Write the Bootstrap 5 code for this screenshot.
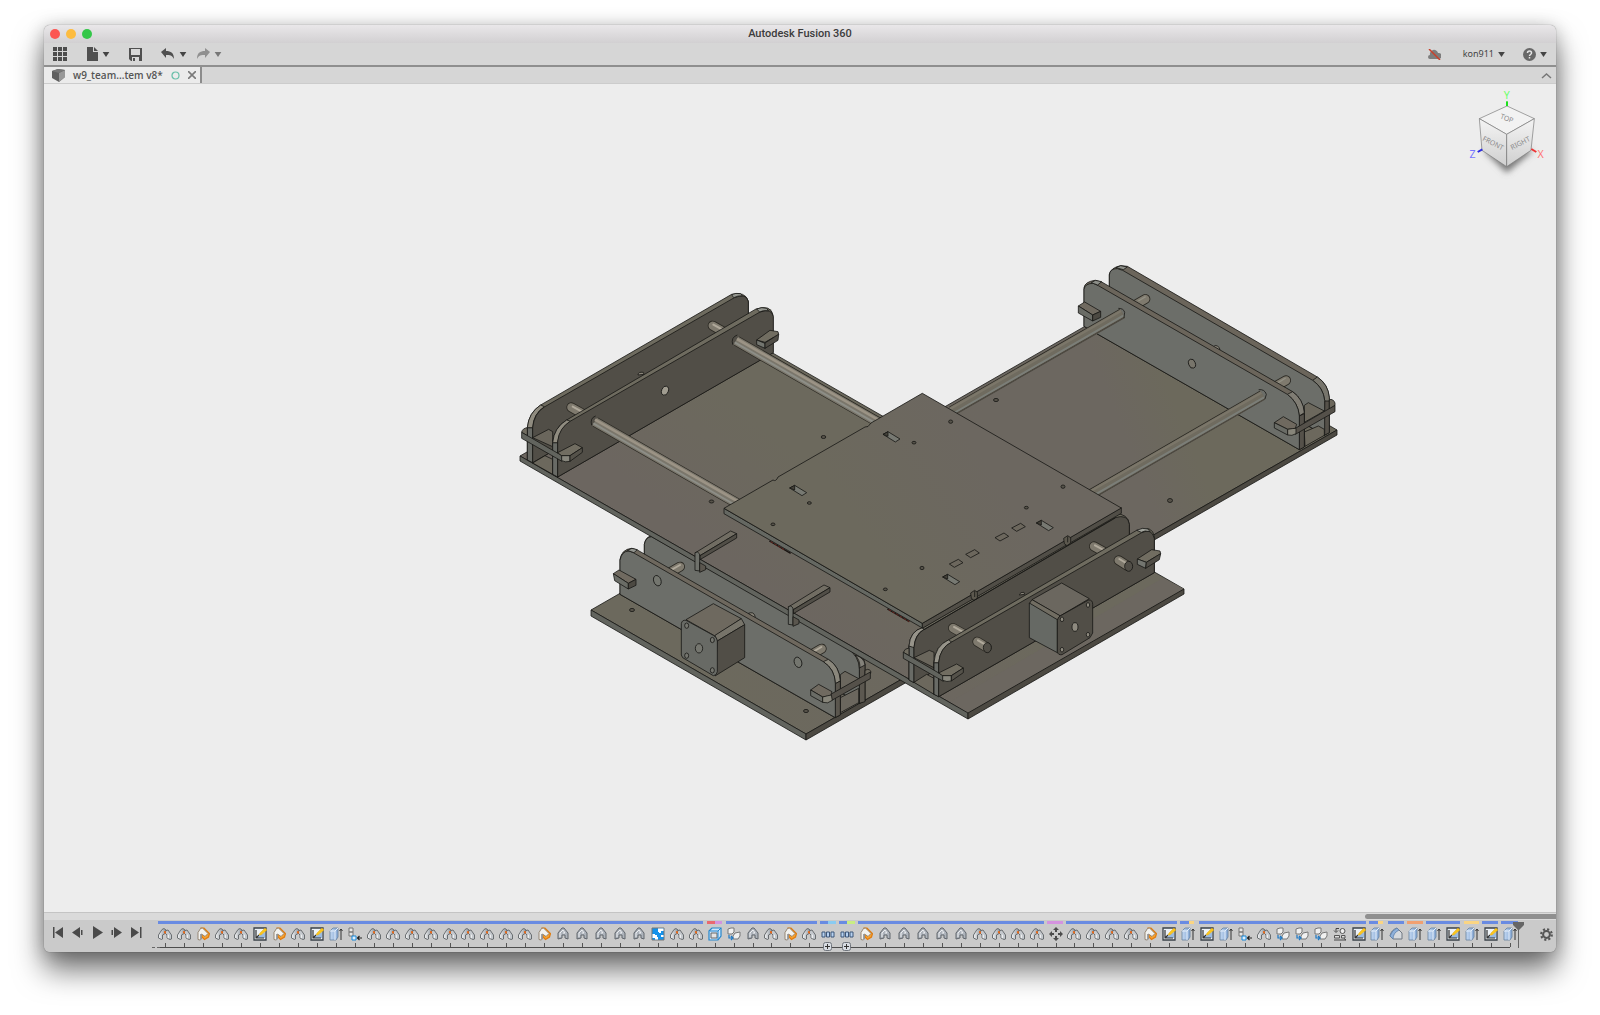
<!DOCTYPE html>
<html lang="en">
<head>
<meta charset="utf-8">
<meta name="viewport" content="width=device-width, initial-scale=1">
<title>Autodesk Fusion 360</title>
<link rel="stylesheet" href="https://cdn.jsdelivr.net/npm/bootstrap@5.3.0/dist/css/bootstrap.min.css">
<style>
body{background:#fff;font-family:Roboto,"Liberation Sans",sans-serif;padding:25px 44px 63px;color:#444}
.app-window{border-radius:6px;background:#ccc;box-shadow:0 0 1px rgba(0,0,0,.6),0 18px 30px rgba(0,0,0,.55),0 2px 18px rgba(0,0,0,.22)}
.app-window svg{display:block;flex:none}
.app-window button{background:none;border:0;padding:0;color:inherit}
.title-bar{height:18px;background:linear-gradient(#e9e7e9,#d2d0d2);border-radius:6px 6px 0 0;color:#3c3c3c}
.title-bar h1{font-size:11px;line-height:18px;font-weight:500}
.lights{left:6px;top:4px;gap:6px}
.lights button{width:10px;height:10px;border-radius:50%}
.app-window .light-close{background:#fc5753}.app-window .light-min{background:#fdbc40}.app-window .light-max{background:#34c749}
.tool-bar{height:24px;background:#d6d6d6;border-bottom:2px solid #8f8f8f;padding:0 9px 0 8px;font:9px/20px "Noto Sans",sans-serif}
.tool-group{gap:19px}
.undo-group{gap:9px}
.tool-group button,.tool-right button{display:flex;align-items:center;gap:4px}
.tool-right .offline{margin-right:22px}
.tool-right .user{margin-right:18px}
.tab-bar{height:17px;background:#d6d6d6;border-bottom:1px solid #ccc}
.doc-tab{width:158px;background:#ebebeb;border-right:2px solid #8c8c8c;padding:0 4px 0 8px;font:600 10px/16px "Open Sans",sans-serif;color:#555}
.view-area{background:#ededed;min-height:0}
.view-area .model{width:100%;height:100%;position:absolute;left:0;top:0}
.rod-edge{stroke:#2b2923;stroke-width:30;stroke-linecap:round}
.rod-body{stroke:#7f7a6e;stroke-width:25;stroke-linecap:round}
.rod-shine{stroke:#b0a99b;stroke-width:6;stroke-linecap:round}
.scroll-track{height:8px;background:#dadada;border-top:1px solid #c4c4c4;padding-left:3px}
.scroll-thumb{width:191px;height:5px;margin-top:1px;background:#8f8f8f;border-radius:3px 0 0 3px}
.time-bar{height:32px;background:#cacaca;border-radius:0 0 6px 6px;color:#4a4a4a}
.playback{width:112px;padding:6px 14px 0 8px}
.time-track{padding-top:1px}
.time-track svg.strip{width:100%;height:3px}
.features{height:20px;margin-top:3px}
.features button{flex:1 1 0;min-width:0;display:flex;justify-content:center;position:relative}
.features button::after{content:"";position:absolute;left:50%;top:16px;width:1px;height:4px;background:#555}
.rail{height:1px;background:#4d4d4d;margin:0 9px 0 4px}
.rail::before{content:"";display:block;position:absolute;width:8px;left:-4px;border-top:1px dashed #666}
.playhead{right:-5px;top:2px}
.features .plus{position:absolute;top:15px;left:4px;z-index:2}
.gear-cell{width:37px;padding:8px 0 0 21px}
</style>
<script src="https://cdn.jsdelivr.net/npm/bootstrap@5.3.0/dist/js/bootstrap.bundle.min.js"></script>
</head>
<body class="vh-100">
<svg width="0" height="0" class="position-absolute" aria-hidden="true">
<defs>
<linearGradient id="steel" x1="0" x2="1" y1="0" y2="0"><stop offset="0" stop-color="#f4f5f6"/><stop offset="1" stop-color="#8e959d"/></linearGradient>
<linearGradient id="blue" x1="0" x2="1"><stop offset="0" stop-color="#c3d8f2"/><stop offset="1" stop-color="#86a8d4"/></linearGradient>
<symbol id="ico-j" viewBox="0 0 14 14"><path d="M.5 11V8L4 2.500l2-1L8 3v3L4.500 8v4l-1 .5z" fill="url(#steel)" stroke="#5f6367" stroke-width=".9"/><path d="M8 3.500l2-.5 3.500 5v4l-1.500.5-3-1.500V8L7 6z" fill="#c4c8cd" stroke="#5f6367" stroke-width=".9"/><path d="M9.500 8l1.500-.5v4l-1.500-.8z" fill="#eceef0"/><path d="M6 4l2 .5v2.200L6 6z" fill="#e8691a"/></symbol>
<symbol id="ico-o" viewBox="0 0 14 14"><path d="M5 1h3l5.500 5.500-1 3.500-4 2.500L6 10z" fill="#f8a12e" stroke="#e07c10" stroke-width="1.200"/><path d="M2 12.500V5.500L4.500 1.500l2-.5L12 6.500 9 9.500 5.500 7v5l-1.500 1z" fill="#f2f2f0" stroke="#8c7c66" stroke-width=".9"/><path d="M4 7v6l1.500-1V7z" fill="#9da1a5"/></symbol>
<symbol id="ico-r" viewBox="0 0 14 14"><path d="M2 12V6l4-5h2l4 5v6l-3-1V8H6v3z" fill="#adb3bb" stroke="#61666d"/><path d="M4 10V6l3-3 2 3H7" fill="none" stroke="#eceef1"/></symbol>
<symbol id="ico-sk" viewBox="0 0 14 14"><path d="M1 1h12v12H1z" fill="#edf2f7" stroke="#3a4148" stroke-width="1.3"/><path d="M3 11h9V5z" fill="#9bbbe0"/><path d="M3 3v8h8M3 11l3-3" fill="none" stroke="#333" stroke-width="1.2"/><path d="M6 8l1-2 5-5 2 2-6 5z" fill="#fbc61e" stroke="#dfa100" stroke-width=".4"/></symbol>
<symbol id="ico-ext" viewBox="0 0 14 14"><path d="M1 4l3-3h5v9l-2 3H1z" fill="url(#blue)" stroke="#65809f" stroke-width=".8"/><path d="M1 4h5v9M6 4l3-3" fill="none" stroke="#e7f0fa"/><path d="M12 13V2M10.500 4L12 2l1.500 2" fill="none" stroke="#333"/></symbol>
<symbol id="ico-comp" viewBox="0 0 14 14"><path d="M1 1h4v4H1zM1 5h4v4H1z" fill="#e9e9e9" stroke="#777"/><path d="M4 9h4v4H4z" fill="#dff0ff" stroke="#1688d8"/><path d="M14 11H9.500M11.500 9l-2 2 2 2" fill="none" stroke="#222" stroke-width="1.2"/></symbol>
<symbol id="ico-puz" viewBox="0 0 14 14"><path d="M1 1h12v12H1z" fill="#1592ea" stroke="#777"/><path d="M7 1.500h5.500V4H10v2H8V5H7zM1.500 7H4v1h2v2h1v2.500H4V11H1.500zM10 8h2.500v2H10z" fill="#fff"/></symbol>
<symbol id="ico-box" viewBox="0 0 14 14"><path d="M1 4l3-3h9v8l-3 4H1z" fill="#cfe6fa" stroke="#2485cb" stroke-width="1.200"/><path d="M3 6h6v5H3z" fill="#e4e4e4" stroke="#666"/><path d="M10 4v9M2 4h8l3-3" fill="none" stroke="#2485cb"/></symbol>
<symbol id="ico-copy" viewBox="0 0 14 14"><path d="M1 4V2l3-1h3v4L5 7H1zM6 9l2-3 5-1v4l-2 3H6z" fill="#f0f0f0" stroke="#777"/><path d="M2 8v3h3M4 9l2 2-2 2" fill="none" stroke="#1b77c5" stroke-width="1.200"/></symbol>
<symbol id="ico-pat" viewBox="0 0 14 14"><path d="M1 5h3v5H1zM5.500 5h3v5h-3zM10 5h3v5h-3z" fill="#b7d2f1" stroke="#3d5679"/></symbol>
<symbol id="ico-move" viewBox="0 0 14 14"><path d="M7 0l3 3H8v2H6V3H4zM7 14l3-3H8V9H6v2H4zM0 7l3-3v2h2v2H3v2zM14 7l-3-3v2H9v2h2v2z" fill="#4c4c4c"/></symbol>
<symbol id="ico-link" viewBox="0 0 14 14"><path d="M1.500 8.500h5V11h-5zM8.500 8.500H12V11H8.500z" fill="#ddd" stroke="#555"/><circle cx="9.500" cy="4" r="2.500" fill="#eee" stroke="#555"/><path d="M6 1.500H3v3M1 3.500l2 2 2-2M1 13h12M11 11.500l2 1.500" fill="none" stroke="#444"/></symbol>
<symbol id="ico-fil" viewBox="0 0 14 14"><path d="M1 9Q2 3 8 1l5 5v6H4z" fill="#d5d9de" stroke="#6f7780"/><path d="M1 9Q3 3 8 1l2 2Q4 6 4 12z" fill="#8eb0da" stroke="#5c7fa9" stroke-width=".8"/></symbol>
<symbol id="caret" viewBox="0 0 8 6"><path d="M0 0h8L4 6z" fill="currentColor"/></symbol>
<linearGradient id="plateR" gradientUnits="userSpaceOnUse" x1="700" y1="650" x2="1250" y2="430"><stop offset="0" stop-color="#6c695d"/><stop offset=".6" stop-color="#6c6760"/><stop offset=".8" stop-color="#6c6760"/><stop offset=".9" stop-color="#6c695c"/></linearGradient>
<linearGradient id="plateL" gradientUnits="userSpaceOnUse" x1="690" y1="530" x2="770" y2="430"><stop offset="0" stop-color="#6c6660"/><stop offset="1" stop-color="#6c695d"/></linearGradient>
<linearGradient id="plateT" gradientUnits="userSpaceOnUse" x1="860" y1="530" x2="980" y2="450"><stop offset="0" stop-color="#6c695d"/><stop offset="1" stop-color="#6c6760"/></linearGradient>
<linearGradient id="cubeL" x2="0" y2="1"><stop offset="0" stop-color="#f4f4f4"/><stop offset="1" stop-color="#cfcfcf"/></linearGradient>
<filter id="soft" x="-50%" y="-50%" width="200%" height="200%"><feGaussianBlur stdDeviation="10"/></filter>
</defs>
</svg>

<main class="app-window h-100 d-flex flex-column">
<header class="title-bar position-relative text-center">
  <div class="lights position-absolute d-flex"><button class="light-close" aria-label="Close"></button><button class="light-min" aria-label="Minimise"></button><button class="light-max" aria-label="Zoom"></button></div>
  <h1 class="m-0">Autodesk Fusion 360</h1>
</header>

<nav class="tool-bar d-flex justify-content-between align-items-center" aria-label="Application">
  <div class="tool-group d-flex align-items-center">
    <button aria-label="Data panel"><svg width="16" height="14" viewBox="0 0 16 14" fill="#4d4d4d"><path d="M1 0h4v4H1zM6 0h4v4H6zM11 0h4v4h-4zM1 5h4v4H1zM6 5h4v4H6zM11 5h4v4h-4zM1 10h4v4H1zM6 10h4v4H6zM11 10h4v4h-4z"/></svg></button>
    <button aria-label="File"><svg width="11" height="14" viewBox="0 0 11 14" fill="#505050"><path d="M0 0h6v5h5v9H0zM7 0l4 4H7z"/></svg><svg width="8" height="5"><use href="#caret"/></svg></button>
    <button aria-label="Save"><svg width="13" height="13" viewBox="0 0 13 13"><path d="M0 0h13v13H2l-2-2z" fill="#505050"/><path d="M2 1h9v6H2z" fill="#d8d8d8"/><path d="M3 9h7v4H3z" fill="#d8d8d8"/><path d="M4 10h2v3H4z" fill="#505050"/></svg></button>
    <div class="undo-group d-flex">
    <button aria-label="Undo"><svg width="14" height="12" viewBox="0 0 14 12"><path d="M0 4l5-4v3c5 0 8 2 8 8-2-4-4-4-8-4v3z" fill="#505050"/></svg><svg width="8" height="5"><use href="#caret"/></svg></button>
    <button aria-label="Redo" style="color:#777"><svg width="14" height="12" viewBox="0 0 14 12"><path d="M14 4L9 0v3C4 3 1 5 1 11c2-4 4-4 8-4v3z" fill="#909090"/></svg><svg width="8" height="5"><use href="#caret"/></svg></button>
    </div>
  </div>
  <div class="tool-right d-flex align-items-center">
    <button aria-label="Offline" class="offline"><svg width="13" height="11" viewBox="0 0 13 11"><path d="M2 10a2 2 0 010-4 4 4 0 018-2 3 3 0 011 6z" fill="#7d7d7d"/><path d="M1 0l11 11" stroke="#c8402b" stroke-width="1.500"/></svg></button>
    <button class="user">kon911<svg width="7" height="5"><use href="#caret"/></svg></button>
    <button aria-label="Help"><svg width="13" height="13" viewBox="0 0 13 13"><circle cx="6.500" cy="6.500" r="6.500" fill="#686868"/><path d="M4.500 5a2 2 0 114 0c0 1.500-2 1.500-2 3M6.500 9v1.500" fill="none" stroke="#e5e5e5" stroke-width="1.500"/></svg><svg width="7" height="5"><use href="#caret"/></svg></button>
  </div>
</nav>

<div class="tab-bar d-flex justify-content-between">
  <div class="doc-tab d-flex align-items-center">
    <svg width="13" height="13" viewBox="0 0 13 13"><path d="M0 2l6-2 7 1v7l-6 5-7-4z" fill="#606060"/><path d="M7 4l6-3v7l-6 5z" fill="#999"/><path d="M0 2l6-2 7 1-6 3z" fill="#777"/></svg>
    <span class="ms-2 me-auto">w9_team...tem v8*</span>
    <svg width="9" height="9" viewBox="0 0 9 9" class="me-2"><circle cx="4.500" cy="4.500" r="3.500" fill="none" stroke="#69bfa9" stroke-width="1.200"/></svg>
    <button aria-label="Close tab"><svg width="8" height="8" viewBox="0 0 8 8"><path d="M0 0l8 8M8 0L0 8" stroke="#7a7a7a" stroke-width="1.600"/></svg></button>
  </div>
  <button aria-label="Collapse" class="pe-1"><svg width="11" height="7" viewBox="0 0 11 7"><path d="M1 6l4.500-4L10 6" fill="none" stroke="#777" stroke-width="1.500"/></svg></button>
</div>

<section class="view-area flex-grow-1 position-relative" aria-label="Model view">
<svg class="model" viewBox="44 83 1512 828" stroke-linejoin="round" stroke="#171714" stroke-width=".8" role="img" aria-label="Two-axis plywood stage">
<!-- lower base plate -->
<path d="M591 609L1122 304 1337 429 806 733z" fill="url(#plateR)"/><path d="M591 609L806 733v6L591 615z" fill="#62645e"/><path d="M806 733L1337 429v5L806 739z" fill="#4c4942"/>
<g fill="#565249"><ellipse cx="996" cy="399" rx="2.500" ry="1.600"/><ellipse cx="1170" cy="499.500" rx="2.500" ry="2"/><ellipse cx="632" cy="609" rx="2.500" ry="1.600"/><ellipse cx="806" cy="710" rx="2.500" ry="1.600"/></g>
<!-- far end walls -->
<g transform="translate(880 250) scale(.33333)" stroke-width="2.400">
<path d="M688 110V70Q692 50 722 44L742 46 1312 378Q1345 400 1348 440V545L1333 553 688 180z" fill="#6b655b"/>
<path d="M1312 378Q1345 400 1348 440V475H1334V448Q1330 410 1298 388z" fill="#77756c"/><path d="M1334 450h14v95l-15 8z" fill="#55514a"/>
<path d="M688 105V72Q690 52 712 53L728 58 1298 388Q1330 410 1334 448V553L688 180z" fill="#6c6e69"/><path d="M708 50l14-6 20 4-12 8z" fill="#8d8f89"/>
<path d="M1000 288q6-10 18 2l2 8z" fill="#8a857a"/>
<g fill="none"><path class="rod-edge" d="M796 144L760 165M1218 388L1185 407"/><path class="rod-body" d="M796 144L760 165M1218 388L1185 407"/></g><path d="M775 150l22-13M1195 395l22-14" stroke="#929084" stroke-width="4"/>
<path d="M1273 463L1285 455 1333 480 1273 514z" fill="#6c685d"/><path d="M1273 543l42-18 18 10V553l-58 33z" fill="#6c685d"/>
<path d="M612 226V110Q615 92 645 88L665 93 1238 422Q1270 445 1273 488V588L1258 596z" fill="#6b655b"/>
<path d="M1238 422Q1270 445 1273 485L1258 495Q1255 455 1222 430z" fill="#807d74"/><path d="M1258 495l15-7v100l-15 8z" fill="#55514a"/>
<path d="M612 226V115Q615 97 640 97L655 104 1222 430Q1255 455 1258 495V596z" fill="#6c6e69"/><path d="M634 95l12-7 19 4-12 10z" fill="#8d8f89"/>
<ellipse cx="936" cy="338" rx="10" ry="14" fill="#78756b" transform="rotate(-20 936 338)"/>
<path d="M595 165L614 153 662 181 638 192z" fill="#706a60"/><path d="M595 165L638 192V210L595 186z" fill="#6a6c66"/><path d="M638 192l24-11v18l-24 11z" fill="#4c4942"/>
<path d="M1348 475V447l5-2q14 4 12 18z" fill="#6c685d"/><path d="M1246 532L1365 463V482L1246 550z" fill="#55514a"/><path d="M1183 515L1210 497 1250 520 1246 532 1223 535z" fill="#6f695f"/><path d="M1183 515L1223 535V552L1183 531z" fill="#6a6c66"/><path d="M1223 535q15-3 25-3v16q-12 8-25 4z" fill="#87857a"/>
<g fill="none" stroke-linecap="butt"><path d="M726 187L215 480M1147 432L630 731" stroke="#2b2923" stroke-width="30"/><path d="M728 186L215 480M1149 431L630 731" stroke="#6f6b5f" stroke-width="26"/><path d="M723 180L210 474M1144 425L626 724" stroke="#7b7669" stroke-width="7"/><path d="M731 193L222 486M1152 439L636 736" stroke="#7b7e78" stroke-width="6"/><path d="M734 199L224 491M1155 444L640 741" stroke="#4e4a42" stroke-width="4"/></g>
<path d="M715 172q16 0 19 12l-2 16M1136 416q18-2 23 14l-4 14" fill="none"/>
</g>
<!-- near-left walls and motor -->
<g transform="translate(580 500) scale(.33333)" stroke-width="2.400">
<path d="M193 165V130Q197 106 215 105L820 455Q855 465 855 490V600L838 607 193 230z" fill="#6b655b"/><path d="M838 500l17-10v112l-17 5z" fill="#5c5850"/>
<path d="M193 165V130Q197 108 215 107L800 440Q838 465 838 505V607L193 230z" fill="#6b6d68"/>
<path d="M825 462q28 8 30 30l-15 8q0-24-15-38z" fill="#84827a"/>
<g fill="none"><path class="rod-edge" d="M300 197L265 217M725 443L690 463"/><path class="rod-body" d="M300 197L265 217M725 443L690 463"/><path class="rod-shine" d="M300 192L270 209M724 438L695 455"/></g><path d="M505 337q16-6 20 8v8z" fill="#8a857a"/>
<path d="M781 521L795 511 838 534 781 565zM781 590l55-28v43l-55 30z" fill="#6b675e"/>
<path d="M120 280V175Q125 145 155 142L172 147 745 475Q778 495 781 540V642L765 650z" fill="#6e685e"/>
<path d="M745 475Q778 495 781 540L766 548Q765 505 730 482z" fill="#8a877c"/><path d="M766 548l15-8v102l-16 8z" fill="#5a564e"/>
<path d="M120 280V178Q125 150 147 150L160 155 730 482Q765 505 766 548V650z" fill="#6c6e69"/><path d="M142 148l14-6 16 4-10 9z" fill="#93958f"/>
<g fill="#74766f"><ellipse cx="232" cy="239" rx="11" ry="16" transform="rotate(-20 232 239)"/><ellipse cx="654" cy="484" rx="11" ry="16" transform="rotate(-20 654 484)"/></g>
<path d="M100 218L117 207 168 235 145 247z" fill="#706a60"/><path d="M100 218L145 247V264L104 239z" fill="#6a6c66"/><path d="M145 247l23-12v18l-23 11z" fill="#4c4942"/>
<path d="M318 356L400 308 484 353 405 405z" fill="#6e695f"/><path d="M405 403l79-50 10 18-82 49z" fill="#77746a"/><path d="M412 420L494 371V470L405 525z" fill="#514e47"/>
<path d="M304 368Q306 356 318 358L400 403Q412 410 412 420V512Q410 524 400 524L308 470 304 462z" fill="#686a65"/>
<g fill="#75766f"><ellipse cx="320" cy="374" rx="6" ry="8"/><ellipse cx="397" cy="417" rx="6" ry="8"/><ellipse cx="320" cy="464" rx="6" ry="8"/><ellipse cx="397" cy="508" rx="6" ry="8"/><ellipse cx="357" cy="442" rx="11" ry="14"/></g>
<path d="M855 524V508l8-3q12 2 9 12z" fill="#6c685d"/><path d="M752 580L871 513V533L752 600z" fill="#55514a"/><path d="M692 567L716 550 756 572 752 584 728 588z" fill="#706a60"/><path d="M692 567L728 588V604L692 584z" fill="#6a6c66"/><path d="M728 588q15-4 26-6l3 16q-14 12-29 6z" fill="#87857a"/>
</g>
<!-- upper base plate -->
<path d="M520 455L736 331 1184 588 968 712z" fill="url(#plateL)"/><path d="M950 701L1163 577 1184 588 968 712z" fill="#6c6760" stroke="none"/><path d="M520 455L968 712v6L520 460z" fill="#62645e"/><path d="M968 712L1184 588v5L968 718z" fill="#4c4942"/>
<g fill="#565249"><ellipse cx="823.500" cy="436" rx="2.300" ry="1.500"/><ellipse cx="711.500" cy="500.500" rx="2.300" ry="1.500"/></g>
<!-- left end walls -->
<g transform="translate(510 280) scale(.33333)" stroke-width="2.400">
<path d="M52 537V440Q56 395 92 372L665 40Q705 30 715 60V170L68 545z" fill="#6e6b5f"/><path d="M52 440h16v105l-16-8z" fill="#696b66"/><path d="M52 440Q56 395 92 372L103 377Q70 398 68 440z" fill="#908c80"/>
<path d="M68 545V440Q72 398 103 378L673 50Q710 35 715 62V170z" fill="#514e47"/><path d="M665 41q12-6 27-3l5 6q-14 0-26 6z" fill="#959790"/>
<path d="M384 282q0-10 16-8l2 6z" fill="#8a857a"/>
<g fill="none"><path class="rod-edge" d="M184 379L225 402M608 134L650 158"/><path class="rod-body" d="M184 379L225 402M608 134L650 158"/><path class="rod-shine" d="M188 377L225 397M610 131L650 153"/></g>
<path d="M68 470L116 445 128 452V497z" fill="#6a665c"/><path d="M68 546L105 524 128 535V580z" fill="#6c685d"/>
<path d="M128 580V485Q132 440 170 417L738 84Q783 70 789 102V215L143 588z" fill="#6e6b5f"/><path d="M128 485h15v103l-15-8z" fill="#696b66"/><path d="M128 485Q132 440 170 417L182 421Q148 442 143 485z" fill="#908c80"/>
<path d="M143 588V480Q148 440 182 420L750 93Q785 80 790 107V215z" fill="#514e47"/><path d="M740 84q16-7 30-2l5 7q-16-2-26 4z" fill="#959790"/>
<ellipse cx="465" cy="329" rx="10" ry="14" fill="#a09c90" transform="rotate(20 465 329)"/>
<path d="M740 177L780 148 804 152 806 160 765 184z" fill="#716d61"/><path d="M740 177l25 10v15l-25-11z" fill="#73756f"/><path d="M765 186l41-26-2 18-39 24z" fill="#504d46"/>
<path d="M35 454q2-12 17-14v24z" fill="#716d61"/><path d="M35 454L156 524V541L35 472z" fill="#62645e"/><path d="M143 515L195 488 217 500 180 524 155 524z" fill="#716d61"/><path d="M155 524h25v17q-14 4-25-2z" fill="#87867c"/><path d="M180 524l37-24v14l-37 27z" fill="#55524a"/>
<g fill="none"><path d="M256 423L690 672M680 180L1105 424" stroke="#2b2923" stroke-width="31"/><path d="M254 422L690 672M678 179L1105 424" stroke="#7a766b" stroke-width="27"/><path d="M255 416L692 666M681 174L1109 419" stroke="#9b9385" stroke-width="8"/><path d="M250 427L686 678M674 184L1103 430" stroke="#8d8e87" stroke-width="6"/></g>
<path d="M245 433q-6-22 12-28M668 191q-6-22 14-29" fill="none"/>
</g>
<!-- edge clips -->
<g transform="translate(580 500) scale(.33333)" stroke-width="2.400">
<g id="edge-clip"><path d="M345 156L452 90 470 98 360 164z" fill="#716d63"/><path d="M360 164L470 98v13L360 176z" fill="#514e47"/><path d="M345 155q8-6 14 4V210l-14-2z" fill="#6f716b"/><path d="M359 185l18 10v11l-18 8z" fill="#5a564e"/></g>
<use href="#edge-clip" x="280" y="162"/>
</g>
<!-- near-right walls and motor -->
<g transform="translate(880 480) scale(.33333)" stroke-width="2.400">
<path d="M87 597V495Q90 450 128 440L705 98Q745 98 748 130V230L102 605z" fill="#6e6b5f"/><path d="M87 495h15v110l-15-8z" fill="#696b66"/><path d="M87 495Q90 450 128 440L132 445Q104 460 102 500z" fill="#97948a"/>
<path d="M102 605V500Q105 462 130 447L705 110Q744 98 748 130V230z" fill="#514e47"/>
<path d="M418 342q2-10 14-8l2 6z" fill="#8a857a"/>
<g fill="none"><path class="rod-edge" d="M219 441L262 465M642 196L685 220"/><path class="rod-body" d="M219 441L262 465M642 196L685 220"/><path class="rod-shine" d="M222 438L262 460M645 193L685 215"/></g>
<path d="M102 530L148 508 162 514V560z" fill="#6a665c"/><path d="M102 604L140 580 162 592V640z" fill="#6c685d"/>
<path d="M162 640V545Q165 495 205 477L770 148Q818 130 823 167V275L176 647z" fill="#6e6b5f"/><path d="M162 545h14v102l-14-7z" fill="#696b66"/><path d="M162 545Q165 495 205 477L215 483Q180 502 176 545z" fill="#97948a"/>
<path d="M176 647V545Q180 500 215 483L785 155Q815 140 823 172V275z" fill="#514e47"/><path d="M770 148q18-10 34-4l6 8q-16-5-26 2z" fill="#a0a29b"/>
<g fill="none"><path class="rod-edge" d="M292 482L320 499M716 238L743 255"/><path class="rod-body" d="M292 482L320 499M716 238L743 255"/><path class="rod-shine" d="M294 478L316 491M718 234L740 247"/></g><g fill="#514e47"><ellipse cx="322" cy="500" rx="12" ry="15"/><ellipse cx="746" cy="256" rx="12" ry="15"/></g>
<path d="M456 356L545 306 628 353 540 405z" fill="#6b675f"/><path d="M448 368l8-12 84 48-8 14z" fill="#716d62"/><path d="M448 366L532 416V515L448 470z" fill="#666964"/>
<path d="M532 418Q534 408 542 404L626 357Q638 356 638 370V456L630 470 546 521Q534 523 532 512z" fill="#514e47"/>
<g fill="#8e8a7f"><ellipse cx="546" cy="415" rx="5" ry="7"/><ellipse cx="624" cy="372" rx="5" ry="7"/><ellipse cx="546" cy="506" rx="5" ry="7"/><ellipse cx="624" cy="461" rx="5" ry="7"/><ellipse cx="585" cy="438" rx="9" ry="13"/></g>
<path d="M772 234L815 206 840 210 842 218 799 244z" fill="#716d61"/><path d="M772 234l27 10-2 18-25-12z" fill="#73756f"/><path d="M799 244l43-26-4 18-41 26z" fill="#504d46"/>
<path d="M70 514q4-12 17-13v23z" fill="#716d61"/><path d="M70 514L190 584V601L70 532z" fill="#62645e"/><path d="M176 576L230 549 250 561 214 584 188 584z" fill="#716d61"/><path d="M188 584h26v16q-14 4-26-2z" fill="#87867c"/><path d="M214 584l36-23v14l-36 25z" fill="#55524a"/>
</g>
<!-- moving top plate -->
<g transform="translate(700 380) scale(.33333)" stroke-width="2.400">
<path d="M72 382L667 727V741L72 398z" fill="#656862"/><path d="M667 727L1264 380V397L667 742z" fill="#514e47"/>
</g>
<path d="M922.300 392.300L1121.300 507 922.300 622.300 724 507.300 773 479q3 2 5-3L865 426q3 1 6-4z" fill="url(#plateT)"/>
<g transform="translate(700 380) scale(.33333)" stroke-width="2.400">
<g fill="#777972"><path id="slot" d="M549 160L564 152 600 174 586 183z"/><use href="#slot" x="-280" y="161"/><use href="#slot" x="460" y="266"/><use href="#slot" x="179" y="428"/></g>
<g fill="#45423a"><path id="slot-end" d="M549 160l15-8v14z"/><use href="#slot-end" x="-280" y="161"/><use href="#slot-end" x="460" y="266"/><use href="#slot-end" x="179" y="428"/></g>
<g fill="#6c675d"><path id="pocket" d="M748 549L775 535 789 545 763 559z"/><use href="#pocket" x="49" y="-29"/><use href="#pocket" x="137" y="-79"/><use href="#pocket" x="187" y="-108"/></g>
<g fill="#56534a"><ellipse cx="752" cy="122" rx="6" ry="5"/><ellipse cx="642" cy="185" rx="6" ry="4"/><ellipse cx="328" cy="366" rx="6" ry="4"/><ellipse cx="219" cy="430" rx="6" ry="4"/><ellipse cx="1089" cy="317" rx="6" ry="5"/><ellipse cx="979" cy="380" rx="6" ry="4"/><ellipse cx="666" cy="561" rx="6" ry="5"/><ellipse cx="556" cy="625" rx="6" ry="4"/></g>
<g fill="#5c584e"><path d="M812 636l12-8 8 6v18l-10 6-8-6zM1091 472l12-8 9 6v16l-11 8-8-6z"/></g><path d="M824 630v18M1103 466v18M672 746L1246 411" fill="none"/>
<path d="M208 480L272 517M562 684L628 722" stroke="#1a1512" stroke-width="4"/><path d="M212 482L256 508M566 686L628 722" stroke="#8a2620" stroke-width="2" stroke-dasharray="8 5"/>
</g>
<!-- view cube -->
<g transform="translate(1401 15) scale(.33333)" stroke="#777" stroke-width="2">
<path d="M250 405L317 375 395 405 317 470z" fill="#777" stroke="none" filter="url(#soft)"/>
<path d="M235 308L318 270 400 308 317 355z" fill="#f2f2f2"/><path d="M235 308L317 355V452L243 403z" fill="url(#cubeL)"/><path d="M317 355L400 308 390 403 317 452z" fill="url(#cubeL)"/>
<path d="M318 270v-14" stroke="#1de01d" stroke-width="6"/><path d="M244 400l-14 8" stroke="#2a2ae0" stroke-width="6"/><path d="M391 399l15 9" stroke="#e33" stroke-width="6"/>
<g stroke="none" font-family="Noto Sans, sans-serif" text-anchor="middle" fill="#8c8c8c"><text transform="translate(315 314) rotate(20)" font-size="21">TOP</text><text transform="translate(273 388) rotate(27)" font-size="21">FRONT</text><text transform="translate(361 388) rotate(-27)" font-size="21">RIGHT</text>
<text x="317" y="249" font-size="32" fill="#6dff6d">Y</text><text x="215" y="427" font-size="32" fill="#7676ff">Z</text><text x="419" y="427" font-size="32" fill="#ff7676">X</text></g>
</g>
</svg>
</section>

<div class="scroll-track d-flex justify-content-end"><div class="scroll-thumb"></div></div>

<footer class="time-bar d-flex">
  <div class="playback d-flex justify-content-between align-items-start">
    <button aria-label="To start"><svg width="12" height="14" viewBox="0 0 12 14" fill="currentColor"><path d="M1 1h1.500v11H1zM11 1v11L3 6.500z"/></svg></button>
    <button aria-label="Step back"><svg width="12" height="14" viewBox="0 0 12 14" fill="currentColor"><path d="M8 1v11L0 6.500zM9 4h1.500v5H9z"/></svg></button>
    <button aria-label="Play"><svg width="11" height="14" viewBox="0 0 11 14" fill="currentColor"><path d="M1 0l10 6.500L1 13z"/></svg></button>
    <button aria-label="Step forward"><svg width="12" height="14" viewBox="0 0 12 14" fill="currentColor"><path d="M4 1v11l8-5.500zM1.500 4H3v5H1.500z"/></svg></button>
    <button aria-label="To end"><svg width="12" height="14" viewBox="0 0 12 14" fill="currentColor"><path d="M10 1h1.500v11H10zM1 1v11l8-5.500z"/></svg></button>
  </div>
  <div class="time-track flex-grow-1 position-relative">
    <svg class="strip" viewBox="156 0 1363 3" preserveAspectRatio="none" aria-hidden="true"><g fill="#698be2"><path d="M158 0h545v3H158zM726 0h91v3h-91zM820 0h8v3h-8zM839 0h8v3h-8zM858 0h186v3H858zM1066 0h111v3h-111zM1180 0h9v3h-9zM1199 0h167v3h-167zM1369 0h9v3h-9zM1388 0h16v3h-16zM1426 0h34v3h-34zM1482 0h16v3h-16zM1501 0h17v3h-17z"/></g><path d="M707 0h8v3h-8z" fill="#e9696f"/><path d="M715 0h7v3h-7zM1047 0h16v3h-16z" fill="#d493df"/><path d="M828 0h8v3h-8z" fill="#8acbf1"/><path d="M847 0h8v3h-8z" fill="#c9ed83"/><path d="M1189 0h5v3h-5zM1378 0h5v3h-5zM1464 0h15v3h-15z" fill="#fad583"/><path d="M1407 0h16v3h-16z" fill="#f1a070"/></svg>
    <div class="features d-flex" id="features"></div>
    <div class="rail"></div>
    <svg class="playhead position-absolute" width="11" height="26" viewBox="0 0 11 26" fill="#666"><path d="M0 0h11v3L6 8v18H5V8L0 3z"/></svg>
  </div>
  <div class="gear-cell"><button class="d-block" aria-label="Timeline settings"><svg width="13" height="13" viewBox="0 0 13 13"><circle cx="6.500" cy="6.500" r="5.300" fill="none" stroke="#555" stroke-width="2.200" stroke-dasharray="2.080 2.080"/><circle cx="6.500" cy="6.500" r="3.400" fill="none" stroke="#555" stroke-width="2"/></svg></button></div>
</footer>
</main>
<script>
const steps = "j j o j j sk o j sk ext comp j j j j j j j j j o r r r r r puz j j box copy r j o j pat pat o r r r r r j j j j move j j j j o sk ext sk ext comp j copy copy copy link sk ext fil ext ext sk ext sk ext".split(" ");
const names = {j:"Joint",o:"As-built joint",r:"Rigid group",sk:"Sketch",ext:"Extrude",comp:"New component",puz:"Plug-in",box:"Shell",copy:"Copy",pat:"Pattern",move:"Move",link:"Joint origin",fil:"Fillet"};
document.getElementById("features").innerHTML = steps.map(s =>
  `<button aria-label="${names[s]}"><svg width="14" height="14"><use href="#ico-${s}"/></svg>${s === "pat" ? '<svg class="plus" width="9" height="9" viewBox="0 0 9 9"><rect x=".5" y=".5" width="8" height="8" rx="2" fill="#d8dce2" stroke="#70757c"/><path d="M4.500 2v5M2 4.500h5" stroke="#333"/></svg>' : ""}</button>`).join("");
</script>
</body>
</html>
